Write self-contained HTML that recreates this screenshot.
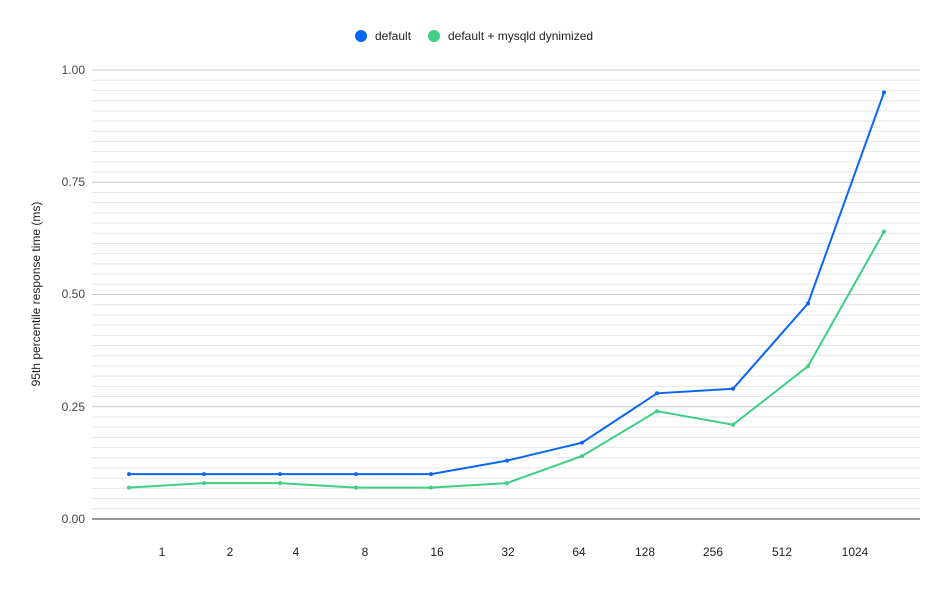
<!DOCTYPE html>
<html><head><meta charset="utf-8"><style>
html,body{margin:0;padding:0;background:#fff;}
svg text{font-family:"Liberation Sans",Arial,sans-serif;}
</style></head><body>
<svg width="951" height="588" viewBox="0 0 951 588" xmlns="http://www.w3.org/2000/svg">
<rect width="951" height="588" fill="#fff"/>
<g id="grid"></g>
<g font-size="12" fill="#444" text-anchor="end">
<text x="85" y="74">1.00</text>
<text x="85" y="186">0.75</text>
<text x="85" y="298">0.50</text>
<text x="85" y="411">0.25</text>
<text x="85" y="523">0.00</text>
</g>
<text transform="translate(40,294) rotate(-90)" font-size="12" fill="#222" text-anchor="middle">95th percentile response time (ms)</text>
<g font-size="12" fill="#222" text-anchor="middle">
<text x="162" y="556">1</text><text x="230" y="556">2</text><text x="296" y="556">4</text>
<text x="365" y="556">8</text><text x="437" y="556">16</text><text x="508" y="556">32</text>
<text x="579" y="556">64</text><text x="645" y="556">128</text><text x="713" y="556">256</text>
<text x="782" y="556">512</text><text x="855" y="556">1024</text>
</g>
<circle cx="361" cy="36" r="6" fill="#0b66f5"/>
<text x="375" y="40" font-size="12" fill="#222">default</text>
<circle cx="434" cy="36" r="6" fill="#3fcf84"/>
<text x="448" y="40" font-size="12" fill="#222">default + mysqld dynimized</text>
<g id="lines"></g>
</svg>
<script>
var ns="http://www.w3.org/2000/svg",g=document.getElementById('grid');
for(var i=0;i<=44;i++){var y=70+i*449/44;var l=document.createElementNS(ns,'line');
l.setAttribute('x1',92);l.setAttribute('x2',920);l.setAttribute('y1',y);l.setAttribute('y2',y);
l.setAttribute('stroke',i%11==0?(i==44?'#333':'#ccc'):'#e6e6e6');l.setAttribute('stroke-width',1);g.appendChild(l);}
var xs=[129,204,280,356,431,507,582,657,733,808,884];
var a=[0.1,0.1,0.1,0.1,0.1,0.13,0.17,0.28,0.29,0.48,0.95];
var b=[0.07,0.08,0.08,0.07,0.07,0.08,0.14,0.24,0.21,0.34,0.64];
var L=document.getElementById('lines');
function draw(d,c){var p=xs.map(function(x,i){return x+','+(519-449*d[i]).toFixed(1)}).join(' ');
var pl=document.createElementNS(ns,'polyline');pl.setAttribute('points',p);pl.setAttribute('fill','none');
pl.setAttribute('stroke',c);pl.setAttribute('stroke-width',2);L.appendChild(pl);
xs.forEach(function(x,i){var ci=document.createElementNS(ns,'circle');ci.setAttribute('cx',x);ci.setAttribute('cy',519-449*d[i]);ci.setAttribute('r',2);ci.setAttribute('fill',c);L.appendChild(ci);});}
draw(b,'#3fcf84');draw(a,'#0b66f5');
</script>
</body></html>
